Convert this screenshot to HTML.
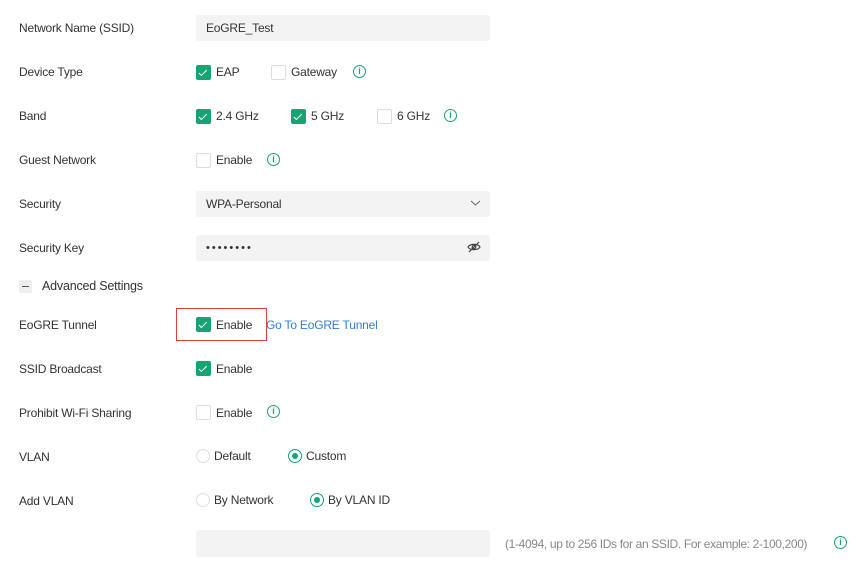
<!DOCTYPE html><html><head><style>
body{margin:0;width:865px;height:568px;background:#fff;font-family:"Liberation Sans",sans-serif;font-size:12px;color:#333;position:relative;overflow:hidden;letter-spacing:-0.2px}
.a{position:absolute;white-space:nowrap;line-height:14px}
.l{left:19px}
.in{position:absolute;left:196px;width:294px;height:26px;background:#f3f3f3;border-radius:3px}
.cb{position:absolute;width:13px;height:13px;border:1px solid #ddd;border-radius:2px;background:#fff}
.cb.on{background:#17a372;border-color:#17a372}
.cb.on:after{content:"";position:absolute;left:4px;top:1.5px;width:3px;height:6.5px;border:solid #fff;border-width:0 1.6px 1.6px 0;transform:rotate(45deg)}
.rd{position:absolute;width:12px;height:12px;border:1px solid #ddd;border-radius:50%}
.rd.on{border-color:#17a372}
.rd.on:after{content:"";position:absolute;left:3px;top:3px;width:6px;height:6px;border-radius:50%;background:#17a372}
.i{position:absolute;width:11px;height:11px;border:1.4px solid #17a372;border-radius:50%;color:#17a372;font-size:9px;line-height:11px;text-align:center;font-weight:bold;letter-spacing:0}
</style></head><body>
<div class="a l" style="top:21px">Network Name (SSID)</div>
<div class="in" style="top:15px"></div><div class="a" style="left:206px;top:21px">EoGRE_Test</div>

<div class="a l" style="top:65px">Device Type</div>
<div class="cb on" style="left:196px;top:65px"></div><div class="a" style="left:216px;top:65px">EAP</div>
<div class="cb" style="left:271px;top:65px"></div><div class="a" style="left:291px;top:65px">Gateway</div>
<div class="i" style="left:353px;top:65px">i</div>

<div class="a l" style="top:109px">Band</div>
<div class="cb on" style="left:196px;top:109px"></div><div class="a" style="left:216px;top:109px">2.4 GHz</div>
<div class="cb on" style="left:291px;top:109px"></div><div class="a" style="left:311px;top:109px">5 GHz</div>
<div class="cb" style="left:377px;top:109px"></div><div class="a" style="left:397px;top:109px">6 GHz</div>
<div class="i" style="left:444px;top:109px">i</div>

<div class="a l" style="top:153px">Guest Network</div>
<div class="cb" style="left:196px;top:153px"></div><div class="a" style="left:216px;top:153px">Enable</div>
<div class="i" style="left:267px;top:153px">i</div>

<div class="a l" style="top:197px">Security</div>
<div class="in" style="top:191px"></div><div class="a" style="left:206px;top:197px">WPA-Personal</div>
<svg class="a" style="left:470px;top:199px" width="11" height="8"><path d="M1 2l4.5 4 4.5-4" fill="none" stroke="#666" stroke-width="1"/></svg>

<div class="a l" style="top:241px">Security Key</div>
<div class="in" style="top:235px"></div><div class="a" style="left:206px;top:241px;letter-spacing:2px;font-size:11px">••••••••</div>
<svg class="a" style="left:467px;top:241px" width="14" height="12"><path d="M1 6c2-3.5 10-3.5 12 0c-2 3.5-10 3.5-12 0z" fill="none" stroke="#444" stroke-width="1.2"/><circle cx="7" cy="6" r="1.8" fill="none" stroke="#444" stroke-width="1.2"/><path d="M2 11L12 1" stroke="#444" stroke-width="1.2"/></svg>

<div style="position:absolute;left:19px;top:280px;width:13px;height:13px;background:#eee;border-radius:2px"><div style="position:absolute;left:3px;top:6px;width:7px;height:1.3px;background:#555"></div></div>
<div class="a" style="left:42px;top:279px;font-size:12.5px">Advanced Settings</div>

<div class="a l" style="top:318px">EoGRE Tunnel</div>
<div style="position:absolute;left:176px;top:308px;width:89px;height:31px;border:1px solid #e43d3d"></div>
<div class="cb on" style="left:196px;top:317px"></div><div class="a" style="left:216px;top:318px">Enable</div>
<div class="a" style="left:266px;top:318px;color:#2f7fd8">Go To EoGRE Tunnel</div>

<div class="a l" style="top:362px">SSID Broadcast</div>
<div class="cb on" style="left:196px;top:361px"></div><div class="a" style="left:216px;top:362px">Enable</div>

<div class="a l" style="top:406px">Prohibit Wi-Fi Sharing</div>
<div class="cb" style="left:196px;top:405px"></div><div class="a" style="left:216px;top:406px">Enable</div>
<div class="i" style="left:267px;top:405px">i</div>

<div class="a l" style="top:450px">VLAN</div>
<div class="rd" style="left:196px;top:449px"></div><div class="a" style="left:214px;top:449px">Default</div>
<div class="rd on" style="left:288px;top:449px"></div><div class="a" style="left:306px;top:449px">Custom</div>

<div class="a l" style="top:494px">Add VLAN</div>
<div class="rd" style="left:196px;top:493px"></div><div class="a" style="left:214px;top:493px">By Network</div>
<div class="rd on" style="left:310px;top:493px"></div><div class="a" style="left:328px;top:493px">By VLAN ID</div>

<div class="in" style="top:530px;height:27px"></div>
<div class="a" style="left:505px;top:537px;color:#888;letter-spacing:-0.35px">(1-4094, up to 256 IDs for an SSID. For example: 2-100,200)</div>
<div class="i" style="left:834px;top:536px">i</div>
</body></html>
